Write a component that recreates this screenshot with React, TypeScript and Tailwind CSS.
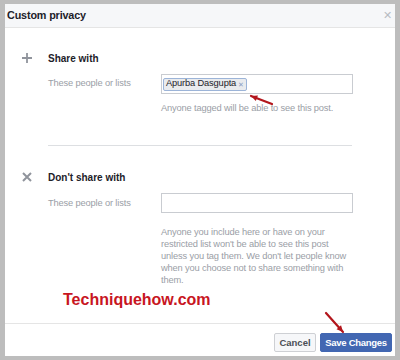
import React from 'react';

const Arrow: React.FC<{ x1: number; y1: number; x2: number; y2: number }> = ({ x1, y1, x2, y2 }) => {
  const ang = Math.atan2(y2 - y1, x2 - x1);
  const len = 7;
  const a1 = ang + Math.PI - 0.45;
  const a2 = ang + Math.PI + 0.45;
  const p = `${x2},${y2} ${x2 + len * Math.cos(a1)},${y2 + len * Math.sin(a1)} ${x2 + len * Math.cos(a2)},${y2 + len * Math.sin(a2)}`;
  return (
    <svg className="absolute left-0 top-0 pointer-events-none" width="400" height="360" viewBox="0 0 400 360">
      <line x1={x1} y1={y1} x2={x2} y2={y2} stroke="#b3161c" strokeWidth="2.2" strokeLinecap="round" />
      <polygon points={p} fill="#b3161c" />
    </svg>
  );
};

const PlusIcon = () => (
  <svg width="10" height="10" viewBox="0 0 10 10">
    <path d="M5 0v10M0 5h10" stroke="#90949c" strokeWidth="1.8" />
  </svg>
);

const CrossIcon = () => (
  <svg width="10" height="10" viewBox="0 0 10 10">
    <path d="M1 1l8 8M9 1l-8 8" stroke="#90949c" strokeWidth="2" />
  </svg>
);

const label = 'text-[9.3px] tracking-[-0.15px] text-[#9a9ea6] leading-none';

const App: React.FC = () => {
  return (
    <div className="relative w-[400px] h-[360px] bg-[#bdbdbd] pt-[4px] pl-[5px]" style={{ fontFamily: '"Liberation Sans", Arial, sans-serif' }}>
      <div className="bg-white w-[390px] h-[352px] flex flex-col">
        {/* Header */}
        <div className="h-[24px] bg-[#f6f7f9] border-b border-[#e5e5e5] flex items-center justify-between pl-[2px] pr-[3px]">
          <span className="text-[10.8px] tracking-[-0.15px] font-bold text-[#1d2129] leading-none">Custom privacy</span>
          <span className="text-[#b8bcc3] text-[11px] leading-none">✕</span>
        </div>

        {/* Body */}
        <div className="flex-1 pl-[17px] pt-[23px]">
          {/* Share with */}
          <div className="flex items-center h-[14px]">
            <div className="w-[26px] flex items-center"><PlusIcon /></div>
            <span className="text-[10px] font-bold text-[#1d2129]">Share with</span>
          </div>
          <div className="flex mt-[9px]">
            <div className="w-[139px] pl-[26px] h-[19px] flex items-center">
              <span className={label}>These people or lists</span>
            </div>
            <div>
              <div className="w-[192px] h-[20px] border border-[#c9ccd1] flex items-center px-[1px]">
                <span className="h-[13px] bg-[#e9ebee] border border-[#9cb4d8] rounded-[2px] px-[2px] flex items-center text-[9.3px] tracking-[-0.15px] text-[#1d2129] leading-none">
                  Apurba Dasgupta <span className="ml-[2px] text-[7px] text-[#8b9dc3]">✕</span>
                </span>
              </div>
              <div className={`mt-[10px] ${label}`}>Anyone tagged will be able to see this post.</div>
            </div>
          </div>

          <div className="ml-[26px] mt-[32px] w-[304px] border-t border-[#dddfe2]" />

          {/* Don't share with */}
          <div className="flex items-center h-[14px] mt-[24px]">
            <div className="w-[26px] flex items-center"><CrossIcon /></div>
            <span className="text-[10px] font-bold text-[#1d2129]">Don't share with</span>
          </div>
          <div className="flex mt-[9px]">
            <div className="w-[139px] pl-[26px] h-[20px] flex items-center">
              <span className={label}>These people or lists</span>
            </div>
            <div>
              <div className="w-[192px] h-[20px] border border-[#c9ccd1]" />
              <div className="mt-[13px] whitespace-nowrap text-[9.3px] tracking-[-0.15px] text-[#9a9ea6] leading-[12px]">
                Anyone you include here or have on your<br />
                restricted list won't be able to see this post<br />
                unless you tag them. We don't let people know<br />
                when you choose not to share something with<br />
                them.
              </div>
            </div>
          </div>

          <div className="ml-[41px] mt-[6px] text-[16px] font-bold text-[#c8161f] leading-none">Techniquehow.com</div>
        </div>

        {/* Footer */}
        <div className="h-[33px] border-t border-[#e5e5e5] flex items-start justify-end gap-[4px] pr-[3px] pt-[9px]">
          <button className="w-[42px] h-[19px] bg-[#f6f7f9] border border-[#ced0d4] rounded-[2px] text-[9.5px] font-bold text-[#4b4f56] leading-none">Cancel</button>
          <button className="w-[72px] h-[19px] bg-[#4267b2] border border-[#4267b2] rounded-[2px] text-[9.5px] tracking-[-0.3px] font-bold text-white leading-none">Save Changes</button>
        </div>
      </div>

      <Arrow x1={272} y1={104} x2={251} y2={96} />
      <Arrow x1={326} y1={313} x2={343} y2={332} />
    </div>
  );
};

export default App;
